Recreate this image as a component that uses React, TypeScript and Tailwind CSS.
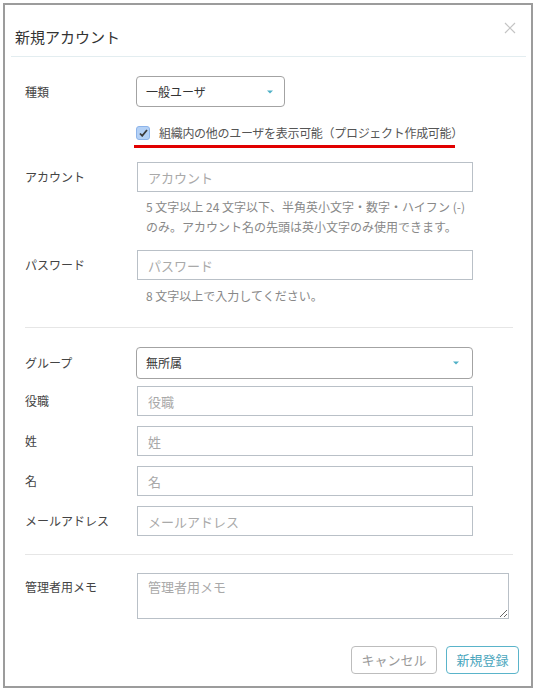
import React from 'react';

const font = { fontFamily: '"Noto Sans CJK JP", "Noto Sans", sans-serif' };

const Label: React.FC<{ children: React.ReactNode; top?: boolean }> = ({ children, top }) => (
  <div className={`w-[112px] shrink-0 text-[12px] leading-[20px] text-[#444] ${top ? 'pt-[4px]' : ''}`}>
    {children}
  </div>
);

const TextInput: React.FC<{ placeholder: string; mt: string }> = ({ placeholder, mt }) => (
  <div className={`flex items-center ${mt}`}>
    <Label>{placeholder}</Label>
    <input
      placeholder={placeholder}
      className="h-[30px] w-[336px] border border-[#b9c0c7] px-[10px] text-[13px] text-[#333] outline-none placeholder:text-[#a9a9a9]"
      style={font}
    />
  </div>
);

const Caret = () => (
  <svg width="6" height="4" viewBox="0 0 6 4" className="shrink-0">
    <path d="M0 0.5h6L3 3.5z" fill="#4fb0c6" />
  </svg>
);

const App: React.FC = () => {
  return (
    <div className="w-[536px] h-[692px] bg-white p-[3px]" style={font}>
      <div className="h-[685px] border-2 border-[#9c9c9c] flex flex-col">
        {/* Header */}
        <div className="relative pt-[22px] pb-[9px] pl-[10px]">
          <h1 className="text-[15px] leading-[20px] text-[#333]">新規アカウント</h1>
          <button className="absolute right-[15px] top-[17px]" aria-label="close">
            <svg width="12" height="12" viewBox="0 0 12 12">
              <path d="M1 1l10 10M11 1L1 11" stroke="#c4c4c4" strokeWidth="1.2" />
            </svg>
          </button>
        </div>
        <div className="h-px bg-[#e3edf0] ml-[6px] mr-[5px]" />

        {/* Body */}
        <div className="pl-[20px]">
          <div className="flex items-center mt-[19px]">
            <Label>種類</Label>
            <div className="h-[31px] w-[149px] -ml-px rounded-[4px] border border-[#a3a3a3] flex items-center justify-between pl-[9px] pr-[11px] text-[12px] text-[#333]">
              <span>一般ユーザ</span>
              <Caret />
            </div>
          </div>

          <div className="ml-[112px] mt-[19px] flex items-center -translate-x-px">
            <span className="w-[14px] h-[14px] rounded-[3px] bg-[#b4d1f6] border border-[#8db4ea] flex items-center justify-center">
              <svg width="9" height="8" viewBox="0 0 9 8">
                <path d="M1 4.5l2.2 2.3L8 1" stroke="#3a3a3a" strokeWidth="1.8" fill="none" />
              </svg>
            </span>
            <span className="ml-[9px] text-[12px] leading-[14px] text-[#555] tracking-[-0.3px]">
              組織内の他のユーザを表示可能（プロジェクト作成可能）
            </span>
          </div>
          <div className="ml-[109px] mt-[5px] h-[3px] w-[321px] bg-[#e10000]" />

          <TextInput placeholder="アカウント" mt="mt-[14px]" />
          <div className="ml-[121px] mt-[5px] text-[12px] leading-[20px] text-[#888]">
            <p>5 文字以上 24 文字以下、半角英小文字・数字・ハイフン (-)</p>
            <p>のみ。アカウント名の先頭は英小文字のみ使用できます。</p>
          </div>

          <TextInput placeholder="パスワード" mt="mt-[13px]" />
          <p className="ml-[121px] mt-[6px] text-[12px] leading-[20px] text-[#888]">8 文字以上で入力してください。</p>

          <div className="mt-[21px] h-px bg-[#e6e6e6] mr-[18px]" />

          <div className="flex items-center mt-[19px]">
            <Label>グループ</Label>
            <div className="h-[32px] w-[337px] -ml-px rounded-[4px] border border-[#a3a3a3] flex items-center justify-between pl-[9px] pr-[13px] text-[12px] text-[#333]">
              <span>無所属</span>
              <Caret />
            </div>
          </div>

          <TextInput placeholder="役職" mt="mt-[7px]" />
          <TextInput placeholder="姓" mt="mt-[10px]" />
          <TextInput placeholder="名" mt="mt-[10px]" />
          <TextInput placeholder="メールアドレス" mt="mt-[10px]" />

          <div className="mt-[18px] h-px bg-[#e6e6e6] mr-[18px]" />

          <div className="flex items-start mt-[18px]">
            <Label top>管理者用メモ</Label>
            <textarea
              placeholder="管理者用メモ"
              className="h-[46px] w-[372px] border border-[#b9c0c7] px-[10px] py-[3px] text-[13px] leading-[20px] text-[#333] outline-none placeholder:text-[#a9a9a9]"
              style={font}
            />
          </div>
        </div>

        {/* Footer */}
        <div className="flex justify-end gap-[9px] mt-[27px] pr-[12px]">
          <button className="h-[28px] w-[86px] rounded-[4px] border border-[#bdbdbd] text-[13px] text-[#999]">
            キャンセル
          </button>
          <button className="h-[28px] w-[73px] rounded-[4px] border border-[#5ab4ca] text-[13px] text-[#4aa6bd]">
            新規登録
          </button>
        </div>
      </div>
    </div>
  );
};

export default App;
